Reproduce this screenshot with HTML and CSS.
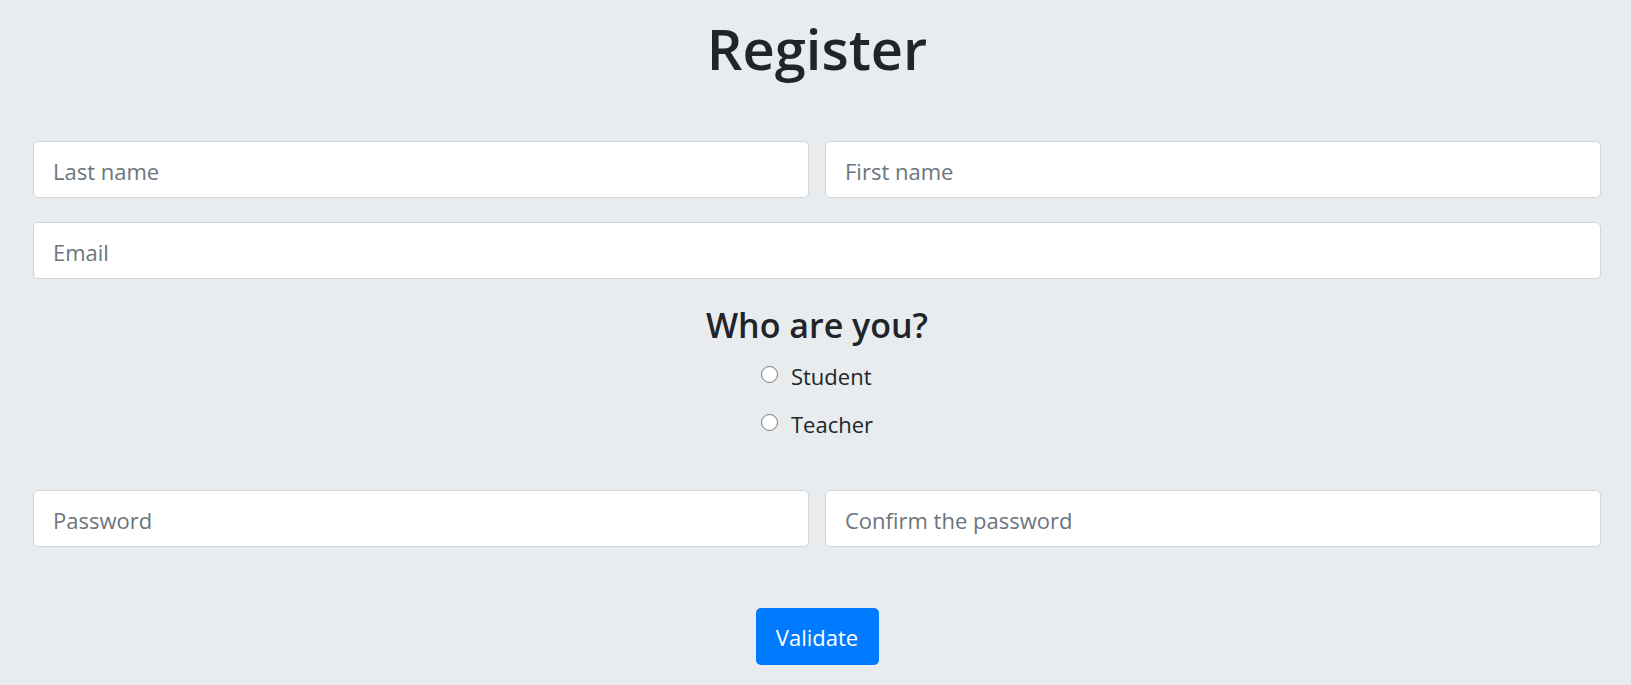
FILE: index.html
```html
<!DOCTYPE html>
<html lang="en">
<head>
<meta charset="utf-8">
<title>Register</title>
<link rel="stylesheet" href="styles.css">
</head>
<body>
<main class="page">
  <h1 class="title">Register</h1>
  <form class="form">
    <div class="row">
      <input class="field" type="text" placeholder="Last name">
      <input class="field" type="text" placeholder="First name">
    </div>
    <div class="row">
      <input class="field" type="email" placeholder="Email">
    </div>
    <fieldset class="role">
      <h2 class="role-title">Who are you?</h2>
      <div class="options">
        <label class="option"><input class="radio" type="radio" name="role"><span>Student</span></label>
        <label class="option"><input class="radio" type="radio" name="role"><span>Teacher</span></label>
      </div>
    </fieldset>
    <div class="row">
      <input class="field" type="password" placeholder="Password">
      <input class="field" type="password" placeholder="Confirm the password">
    </div>
    <div class="actions">
      <button class="btn" type="button">Validate</button>
    </div>
  </form>
</main>
</body>
</html>
```

FILE: styles.css
```css
* { box-sizing: border-box; }
html, body { margin: 0; }
body {
  background: #e9ecef;
  color: #212529;
  font-family: "Open Sans", "Noto Sans", sans-serif;
  height: 685px;
  overflow: hidden;
}
.page {
  padding: 0 30px 0 33px;
}
.title {
  margin: 0;
  padding-top: 10px;
  text-align: center;
  font-size: 56px;
  font-weight: 600;
  line-height: 76px;
}
.form {
  margin-top: 55px;
  display: flex;
  flex-direction: column;
}
.row {
  display: flex;
  gap: 16px;
  margin-bottom: 24px;
}
.field {
  flex: 1;
  min-width: 0;
  height: 57px;
  padding: 2px 19px 0;
  border: 1px solid #ced4da;
  border-radius: 5px;
  background: #fff;
  font-family: inherit;
  font-size: 22px;
  color: #495057;
}
.field::placeholder { color: #6c757d; }
.role {
  border: 0;
  margin: 0;
  padding: 0;
  display: flex;
  flex-direction: column;
  align-items: center;
}
.role-title {
  margin: 0;
  font-size: 34px;
  font-weight: 600;
  line-height: 44px;
}
.options {
  display: flex;
  flex-direction: column;
  gap: 18px;
  margin-top: 14px;
  margin-bottom: 51px;
}
.option {
  display: flex;
  align-items: center;
  gap: 13px;
  font-size: 22px;
  line-height: 30px;
}
.radio {
  appearance: none;
  -webkit-appearance: none;
  margin: 0;
  width: 17px;
  height: 17px;
  border: 1px solid #767676;
  border-radius: 50%;
  background: #fff;
  position: relative;
  top: -2px;
}
.actions {
  display: flex;
  justify-content: center;
  margin-top: 37px;
}
.btn {
  height: 57px;
  width: 123px;
  border: 0;
  border-radius: 5px;
  background: #007bff;
  color: #fff;
  font-family: inherit;
  font-size: 22px;
}
```
